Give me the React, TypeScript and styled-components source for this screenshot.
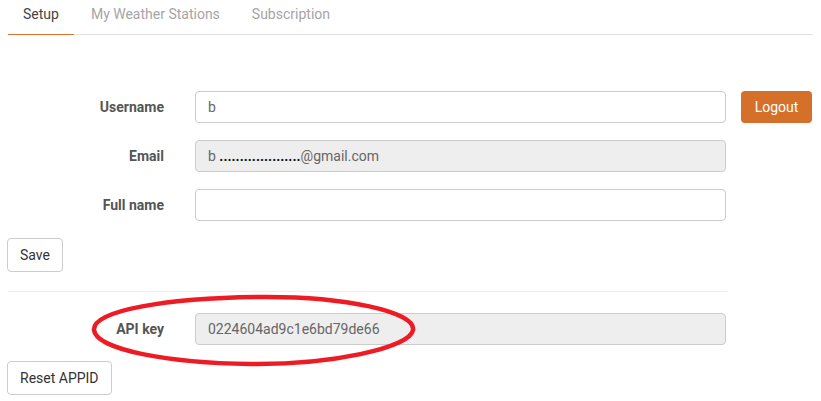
import React from 'react';
import styled, {createGlobalStyle} from 'styled-components';

const GlobalStyle = createGlobalStyle`
  body {
    margin: 0;
    font-family: Roboto, "Liberation Sans", Arial, sans-serif;
    background: #fff;
    color: #333;
  }
`;

const tabs = ['Setup', 'My Weather Stations', 'Subscription'];

export default function App() {
    return (
        <Page>
            <GlobalStyle/>
            <Tabs>
                {tabs.map((t, i) => (
                    <Tab key={t} active={i === 0}>{t}</Tab>
                ))}
            </Tabs>

            <Form>
                <Row>
                    <Label>Username</Label>
                    <Input defaultValue="b"/>
                    <LogoutButton>Logout</LogoutButton>
                </Row>
                <Row>
                    <Label>Email</Label>
                    <ReadOnlyField>
                        b <Mask>....................</Mask>@gmail.com
                    </ReadOnlyField>
                </Row>
                <Row>
                    <Label>Full name</Label>
                    <Input defaultValue=""/>
                </Row>
                <Button>Save</Button>

                <Divider/>

                <Row annotated>
                    <Label>API key</Label>
                    <Input disabled defaultValue="0224604ad9c1e6bd79de66"/>
                    <Circle width="330" height="74" viewBox="0 0 330 74">
                        <path
                            d="M 168 3 C 255 2, 326 18, 323 36 C 320 54, 240 71, 160 70 C 80 69, 6 56, 4 36 C 2 16, 80 4, 168 3 Z"
                            fill="none"
                            stroke="#ed1c24"
                            strokeWidth="4.5"
                        />
                    </Circle>
                </Row>
                <Button>Reset APPID</Button>
            </Form>
        </Page>
    );
}

const Page = styled.div`
  padding: 0 8px;
  width: 821px;
  box-sizing: border-box;
`;

const Tabs = styled.div`
  display: flex;
  gap: 2px;
  border-bottom: 1px solid #e2e2e2;
  height: 34px;
`;

const Tab = styled.div<{ active?: boolean }>`
  padding: 4px 15px 9px;
  line-height: 20px;
  font-size: 14px;
  color: ${p => (p.active ? '#444' : '#a5a5a5')};
  border-bottom: 1px solid ${p => (p.active ? '#d9712a' : 'transparent')};
  margin-bottom: -1px;
`;

const Form = styled.div`
  display: flex;
  flex-direction: column;
  align-items: flex-start;
  padding-top: 56px;
`;

const Row = styled.div<{ annotated?: boolean }>`
  position: relative;
  display: flex;
  align-items: center;
  margin-bottom: ${p => (p.annotated ? '16px' : '17px')};
`;

const Label = styled.label`
  width: 156px;
  margin-right: 31px;
  text-align: right;
  font-size: 14px;
  font-weight: bold;
  color: #555;
`;

const Input = styled.input`
  width: 531px;
  height: 32px;
  box-sizing: border-box;
  padding: 0 12px;
  border: 1px solid #ccc;
  border-radius: 4px;
  font-family: Roboto, "Liberation Sans", Arial, sans-serif;
  font-size: 14px;
  color: #666;
  background: #fff;

  &:disabled {
    background: #eee;
    color: #666;
    -webkit-text-fill-color: #666;
    opacity: 1;
  }
`;

const ReadOnlyField = styled.div`
  width: 531px;
  height: 32px;
  box-sizing: border-box;
  padding: 0 12px;
  display: flex;
  align-items: center;
  white-space: pre;
  border: 1px solid #ccc;
  border-radius: 4px;
  background: #eee;
  font-size: 14px;
  color: #666;
`;

const Mask = styled.span`
  color: #111;
  font-weight: bold;
`;

const Button = styled.button`
  margin-left: -1px;
  height: 34px;
  padding: 0 12px;
  border: 1px solid #ccc;
  border-radius: 4px;
  background: #fff;
  color: #333;
  font-family: Roboto, "Liberation Sans", Arial, sans-serif;
  font-size: 14px;
`;

const LogoutButton = styled.button`
  margin-left: 15px;
  height: 32px;
  width: 71px;
  border: none;
  border-radius: 4px;
  background: #d5702a;
  color: #fff;
  font-family: Roboto, "Liberation Sans", Arial, sans-serif;
  font-size: 14px;
`;

const Divider = styled.div`
  width: 719px;
  height: 1px;
  background: #eee;
  margin: 19px 0 21px;
`;

const Circle = styled.svg`
  position: absolute;
  left: 82px;
  top: -19px;
  pointer-events: none;
`;
